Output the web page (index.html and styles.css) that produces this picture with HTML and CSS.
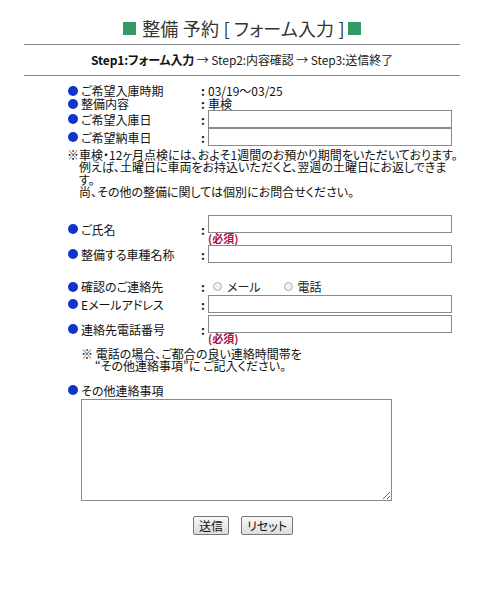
FILE: index.html
```html
<!DOCTYPE html>
<html lang="ja">
<head>
<meta charset="utf-8">
<title>整備 予約</title>
<link rel="stylesheet" href="styles.css">
</head>
<body>
<div class="page">
  <h1 class="title"><span class="sq"></span><span class="ttext">整備 予約 [ フォーム入力 ]</span><span class="sq sq-r"></span></h1>
  <div class="steps"><b>Step1:フォーム入力</b> → Step2:内容確認 → Step3:送信終了</div>
  <form class="form">
    <div class="grid g1">
      <div class="lab"><span class="dot"></span>ご希望入庫時期</div><div class="col">:</div><div class="val">03/19～03/25</div>
      <div class="lab"><span class="dot"></span>整備内容</div><div class="col">:</div><div class="val">車検</div>
      <div class="lab"><span class="dot"></span>ご希望入庫日</div><div class="col">:</div><div class="val"><input class="txt" type="text"></div>
      <div class="lab"><span class="dot"></span>ご希望納車日</div><div class="col">:</div><div class="val"><input class="txt" type="text"></div>
    </div>
    <p class="note1">※車検・12ヶ月点検には、およそ1週間のお預かり期間をいただいております。<br><span class="ind">例えば、土曜日に車両をお持込いただくと、翌週の土曜日にお返しできま<br>す。</span><span class="ind">尚、その他の整備に関しては個別にお問合せください。</span></p>
    <div class="grid g2">
      <div class="lab"><span class="dot"></span>ご氏名</div><div class="col">:</div><div class="val"><input class="txt" type="text"><div class="req">(必須)</div></div>
      <div class="lab"><span class="dot"></span>整備する車種名称</div><div class="col">:</div><div class="val"><input class="txt" type="text"></div>
    </div>
    <div class="grid g3">
      <div class="lab"><span class="dot"></span>確認のご連絡先</div><div class="col">:</div><div class="val radios"><label class="rl rl1"><span class="radio"></span>メール</label><label class="rl"><span class="radio"></span>電話</label></div>
      <div class="lab"><span class="dot"></span>Eメールアドレス</div><div class="col">:</div><div class="val"><input class="txt" type="text"></div>
      <div class="lab"><span class="dot"></span>連絡先電話番号</div><div class="col">:</div><div class="val"><input class="txt" type="text"><div class="req">(必須)</div></div>
    </div>
    <p class="note2">※ 電話の場合、ご都合の良い連絡時間帯を<br><span class="ind2">“その他連絡事項”に ご記入ください。</span></p>
    <div class="lab other"><span class="dot"></span>その他連絡事項</div>
    <textarea class="area"></textarea>
    <div class="btns"><button type="button" class="btn">送信</button><button type="button" class="btn">リセット</button></div>
  </form>
</div>
</body>
</html>
```
FILE: styles.css
```css
html, body { margin: 0; padding: 0; background: #fff; }
body {
  font-family: "Noto Sans CJK JP", "DejaVu Sans", sans-serif;
  font-size: 12px;
  color: #111;
  font-feature-settings: "palt";
}
.page { width: 436px; margin-left: 24px; padding-top: 17px; }
.title {
  margin: 0;
  padding-bottom: 5px;
  border-bottom: 1px solid #888;
  display: flex; justify-content: center; align-items: center;
  font-size: 18px; font-weight: normal; color: #333; line-height: 22px;
  letter-spacing: 0.2px;
}
.sq { display: inline-block; width: 13px; height: 13px; background: #339966; margin: 0 6px 0 0; }
.sq-r { margin: 0 0 0 3px; }
.steps {
  text-align: center; line-height: 14px; padding: 8px 0 8px;
  border-bottom: 1px solid #888;
  font-size: 12px; color: #222; letter-spacing: -0.1px;
}
.steps b { color: #111; }
.form { margin-left: 43px; padding-top: 8px; }
.grid { display: grid; grid-template-columns: 134px 7px 244px; align-items: center; }
.lab { display: flex; align-items: center; line-height: 13px; white-space: nowrap; }
.dot { display: inline-block; width: 10px; height: 10px; border-radius: 50%; background: #1133cc; margin-right: 3px; margin-left: 1px; }
.col { font-weight: bold; line-height: 13px; }
.val { line-height: 13px; }
.txt {
  display: block; box-sizing: border-box; width: 244px; height: 18px; margin: 0;
  border: 1px solid #8a8a8a; padding: 0 2px; font: inherit; background: #fff;
}
.note1 { margin: 3px 0 0 0; line-height: 12.3px; font-size: 12px; width: 400px; }
.ind { display: block; padding-left: 12px; }
.g2 { margin-top: 17px; row-gap: 2px; }
.req { color: #aa1144; font-weight: bold; font-size: 11px; line-height: 10px; height: 10px; }
.g3 { margin-top: 17px; row-gap: 2px; }
.radios { display: flex; align-items: center; padding-left: 5px; }
.rl { display: flex; align-items: center; color: #222; }
.rl1 { margin-right: 23px; }
.radio { display: inline-block; width: 9px; height: 9px; border-radius: 50%; border: 1px solid #aaa; background: #f2f2f2; margin-right: 5px; box-sizing: border-box; }
.note2 { margin: 5px 0 0 14px; line-height: 12.3px; }
.ind2 { padding-left: 14px; }
.other { margin-top: 11px; }
.area {
  display: block; box-sizing: border-box; width: 311px; height: 102px; margin: 2px 0 0 14px;
  border: 1px solid #8a8a8a; resize: both; font: inherit;
}
.btns { display: flex; justify-content: flex-start; gap: 12px; margin: 15px 0 0 126px; }
.btn {
  font: inherit; font-size: 12px; height: 19px; padding: 0 5px; line-height: 15px;
  border: 1px solid #777; border-radius: 2px; background: linear-gradient(#f8f8f8, #dcdcdc); color: #111;
}
```
